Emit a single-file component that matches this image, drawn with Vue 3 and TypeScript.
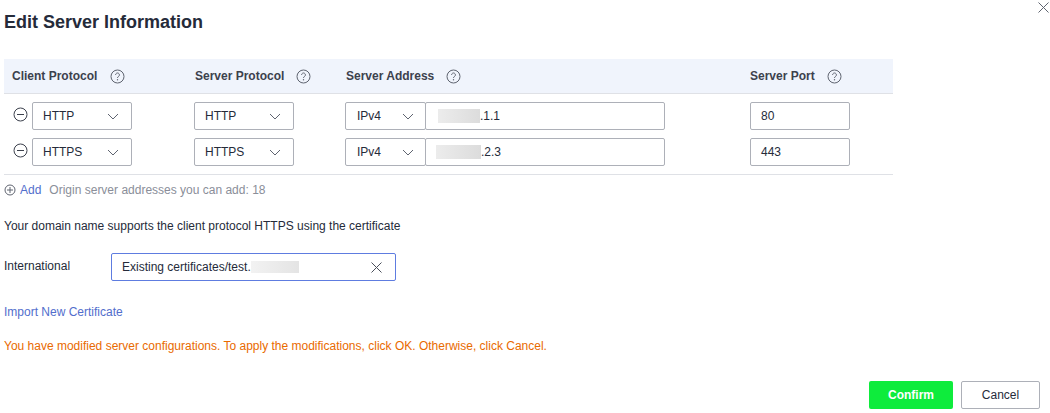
<script setup lang="ts">
interface Row { client: string; server: string; prefixWidth: number; prefixGap: number; suffix: string; port: string }
const headers = ['Client Protocol', 'Server Protocol', 'Server Address', 'Server Port']
const rows: Row[] = [
  { client: 'HTTP', server: 'HTTP', prefixWidth: 42, prefixGap: 12, suffix: '.1.1', port: '80' },
  { client: 'HTTPS', server: 'HTTPS', prefixWidth: 45, prefixGap: 10, suffix: '.2.3', port: '443' },
]
</script>

<template>
  <div class="dialog">
    <div class="title-row">
      <h1 class="title">Edit Server Information</h1>
      <svg class="close" width="11" height="11" viewBox="0 0 11 11" aria-label="Close">
        <path d="M.5 .5 L10.5 10.5 M10.5 .5 L.5 10.5" stroke="#5f6470" stroke-width="1" fill="none" />
      </svg>
    </div>

    <div class="table">
      <div class="grid head">
        <div v-for="h in headers" :key="h" class="th">
          <span>{{ h }}</span>
          <svg width="15" height="15" viewBox="0 0 15 15" class="help">
            <circle cx="7.5" cy="7.5" r="6.5" fill="none" stroke="#5f6470" />
            <path d="M5.6 5.9 a1.9 1.9 0 1 1 2.9 1.6 c-.7.4-1 .8-1 1.5" fill="none" stroke="#5f6470" />
            <circle cx="7.5" cy="10.8" r=".7" fill="#5f6470" />
          </svg>
        </div>
      </div>
      <div class="body">
        <div v-for="r in rows" :key="r.port" class="grid row">
          <div class="cell first">
            <svg width="15" height="15" viewBox="0 0 15 15" class="minus">
              <circle cx="7.5" cy="7.5" r="6.5" fill="none" stroke="#3c414d" />
              <path d="M4 7.5 H11" stroke="#3c414d" />
            </svg>
            <div class="control select"><span>{{ r.client }}</span><svg class="chev" width="12" height="7" viewBox="0 0 12 7"><path d="M1 1 L6 6 L11 1" fill="none" stroke="#5f6470" /></svg></div>
          </div>
          <div class="cell">
            <div class="control select"><span>{{ r.server }}</span><svg class="chev" width="12" height="7" viewBox="0 0 12 7"><path d="M1 1 L6 6 L11 1" fill="none" stroke="#5f6470" /></svg></div>
          </div>
          <div class="cell joined">
            <div class="control select ipver"><span>IPv4</span><svg class="chev" width="12" height="7" viewBox="0 0 12 7"><path d="M1 1 L6 6 L11 1" fill="none" stroke="#5f6470" /></svg></div>
            <div class="control address">
              <span class="blur" :style="{ width: r.prefixWidth + 'px', marginLeft: r.prefixGap + 'px' }"></span><span>{{ r.suffix }}</span>
            </div>
          </div>
          <div class="cell">
            <div class="control port">{{ r.port }}</div>
          </div>
        </div>
      </div>
    </div>

    <div class="add-row">
      <svg width="12" height="12" viewBox="0 0 12 12" class="plus">
        <circle cx="6" cy="6" r="5" fill="none" stroke="#5f6470" />
        <path d="M3 6 H9 M6 3 V9" stroke="#5f6470" />
      </svg>
      <a class="link add">Add</a>
      <span class="muted">Origin server addresses you can add: 18</span>
    </div>

    <p class="support">Your domain name supports the client protocol HTTPS using the certificate</p>

    <div class="cert-row">
      <label class="cert-label">International</label>
      <div class="control cert">
        <span>Existing certificates/test.</span><span class="blur cert-blur"></span>
        <svg class="clear" width="11" height="11" viewBox="0 0 11 11"><path d="M.5 .5 L10.5 10.5 M10.5 .5 L.5 10.5" stroke="#4a4f5b" fill="none" /></svg>
      </div>
    </div>

    <a class="link import">Import New Certificate</a>

    <p class="warning">You have modified server configurations. To apply the modifications, click OK. Otherwise, click Cancel.</p>

    <div class="actions">
      <button class="btn primary" type="button">Confirm</button>
      <button class="btn" type="button">Cancel</button>
    </div>
  </div>
</template>

<style>
html, body { margin: 0; background: #fff; }
</style>

<style scoped>
.dialog {
  width: 1050px;
  height: 413px;
  box-sizing: border-box;
  padding: 0 10px 0 4px;
  font-family: "Liberation Sans", Arial, sans-serif;
  font-size: 12px;
  color: #252b3a;
  overflow: hidden;
  display: flex;
  flex-direction: column;
}
.title-row {
  height: 59px;
  display: flex;
  justify-content: space-between;
  align-items: flex-start;
  flex: none;
}
.title {
  margin: 12px 0 0;
  font-size: 18px;
  line-height: 21px;
  font-weight: 700;
  color: #252b3a;
}
.close { margin: 2px -9px 0 0; }
.table { width: 889px; border-bottom: 1px solid #dfe1e6; flex: none; }
.grid {
  display: grid;
  grid-template-columns: 190px 151px 405px 143px;
}
.head {
  height: 34px;
  background: #f0f4fc;
  border-bottom: 1px solid #dfe1e6;
}
.th {
  display: flex;
  align-items: center;
  font-weight: 700;
  color: #3c414d;
  padding-left: 1px;
}
.th:first-child { padding-left: 8px; }
.th .help { margin-left: 12px; }
.th:first-child .help { margin-left: 13px; }
.th:nth-child(3) { padding-left: 1px; }
.th:last-child { padding-left: 0; }
.body { padding: 8px 0 8px; display: flex; flex-direction: column; gap: 8px; }
.row { height: 28px; }
.cell { display: flex; align-items: center; }
.first { padding-left: 9px; }
.minus { margin-right: 4px; margin-top: -4px; }
.control {
  box-sizing: border-box;
  height: 28px;
  border: 1px solid #adb0b8;
  border-radius: 2px;
  display: flex;
  align-items: center;
  padding: 0 10px;
  background: #fff;
  color: #252b3a;
}
.select { width: 100px; justify-content: space-between; padding-right: 12px; }
.ipver { width: 81px; padding: 0 11px; }
.address { width: 240px; margin-left: -1px; padding: 0; }
.port { width: 100px; }
.blur {
  display: inline-block;
  height: 14px;
  background: linear-gradient(90deg, #ececec, #dcdcdc);
}
.add-row {
  display: flex;
  align-items: center;
  height: 14px;
  margin-top: 8px;
  flex: none;
}
.plus { margin-right: 4px; }
.link { color: #526ecc; cursor: pointer; }
.add { margin-right: 8px; }
.muted { color: #8a8e99; }
.support { margin: 22px 0 0; line-height: 14px; color: #252b3a; flex: none; }
.cert-row { display: flex; align-items: center; margin-top: 20px; flex: none; }
.cert-label { width: 107px; position: relative; top: -1px; }
.cert {
  width: 285px;
  border-color: #5e7ce0;
  position: relative;
}
.cert-blur { width: 48px; height: 12px; background: linear-gradient(90deg, #f2f2f2, #e4e4e4); }
.clear { position: absolute; right: 13px; top: 8px; }
.import { margin-top: 24px; line-height: 14px; flex: none; }
.warning { margin: 20px 0 0; line-height: 14px; color: #e96a00; flex: none; }
.actions {
  margin-top: 28px;
  display: flex;
  justify-content: flex-end;
  gap: 8px;
  flex: none;
}
.btn {
  box-sizing: border-box;
  width: 79px;
  height: 28px;
  border: 1px solid #adb0b8;
  border-radius: 2px;
  background: #fff;
  color: #252b3a;
  font: inherit;
  padding: 0;
}
.primary {
  width: 84px;
  border: none;
  background: #0eec3c;
  color: #fff;
  font-weight: 700;
}
</style>
